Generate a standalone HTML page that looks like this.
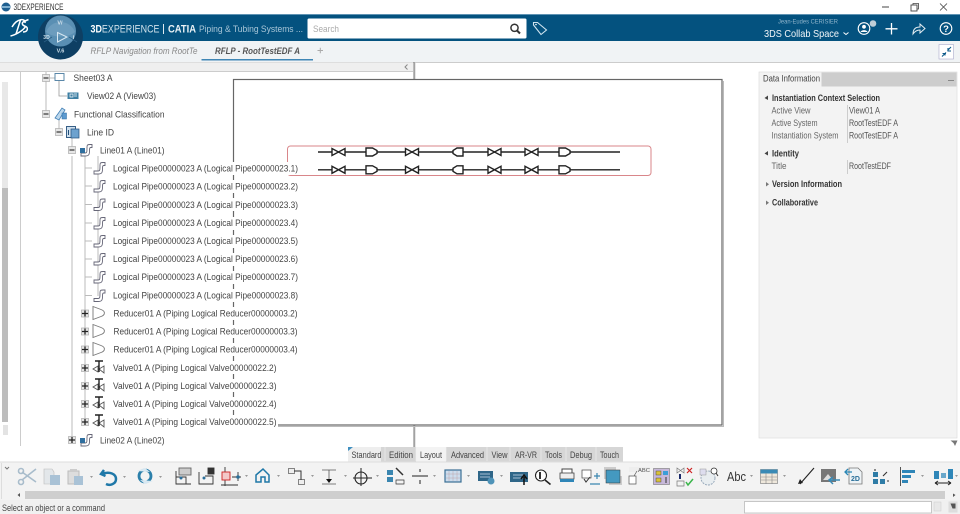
<!DOCTYPE html>
<html><head><meta charset="utf-8"><style>
html,body{margin:0;padding:0;background:#fff;width:960px;height:514px;overflow:hidden}
svg{display:block;font-family:"Liberation Sans",sans-serif;filter:blur(.35px)}
.t{font-size:9.200px;fill:#444}
</style></head><body>
<svg width="960" height="514" viewBox="0 0 960 514" xmlns="http://www.w3.org/2000/svg">
<defs>
<g id="mn"><rect x="-3.500" y="-3.500" width="7" height="7" fill="#e6e6e6" stroke="#aaa" stroke-width=".7"/><path d="M-2.500 0H2.500" stroke="#333" stroke-width="1.200"/></g>
<g id="pl"><rect x="-3.500" y="-3.500" width="7" height="7" fill="#e6e6e6" stroke="#aaa" stroke-width=".7"/><path d="M-3 0H3M0-3V3" stroke="#222" stroke-width="1.300"/></g>
<path id="pipe" d="M-5 3H-1C1 3 1 2 1-3C1-5.500 2-5.500 4-5.500H6V-2.500H4.500C3.500-2.500 3.500-1 3.500 1C3.500 5 2.500 6 -1 6H-5Z" fill="#fff" stroke="#667" stroke-width=".9"/>
<path id="red" d="M-6-6.500L2-3.500C6.500-2 6.500 2 2 3.500L-6 6.500Z" fill="#fff" stroke="#777" stroke-width=".9"/>
<g id="val" fill="none" stroke="#555" stroke-width=".9"><path d="M-6 1L-1 4V-2ZM5-2L0 1L5 5Z" fill="#fff"/><path d="M-4-7H4M0-7V4" stroke="#222" stroke-width="1.400"/></g>
<path id="sv" d="M-6.500-3.500V3.500L6.500-3.500V3.500Z" fill="#fff" stroke="#222" stroke-width="1.400"/>
<path id="sr" d="M-5.500-4H1L5.500-1.500V1.500L1 4H-5.500Z" fill="#fff" stroke="#222" stroke-width="1.400"/>
<path id="sl" d="M5-4H-1L-5-1.500V1.500L-1 4H5Z" fill="#fff" stroke="#222" stroke-width="1.400"/>
<path id="dd" d="M0 0H3L1.500 2Z" fill="#999"/>
</defs>

<!-- title bar -->
<rect width="960" height="14" fill="#fff"/>
<circle cx="6" cy="7" r="4.500" fill="#1f5f90"/><path d="M2 6H10V8H2Z" fill="#7fb0d0"/>
<text x="13.500" y="10.200" font-size="8.800" fill="#333" textLength="50" lengthAdjust="spacingAndGlyphs">3DEXPERIENCE</text>
<path d="M882 7H889" stroke="#444"/>
<rect x="911" y="5" width="6" height="6" fill="none" stroke="#444" stroke-width=".9"/><path d="M913 5V3.500H918.500V9H917" fill="none" stroke="#444" stroke-width=".8"/>
<path d="M940 3.500L947 10.500M947 3.500L940 10.500" stroke="#444" stroke-width=".8"/>

<!-- blue bar -->
<rect y="14" width="960" height="27" fill="#04527f"/>
<rect y="14" width="960" height="1" fill="#5f93b3"/>
<path d="M10.500 36C15 35 23 31 26 26M12 27C17 18 26 18 25 23M20.500 20L16 34M23 32C28 32 29 27 24.500 26C22 25 21 22.500 25 21L28.500 19.500" fill="none" stroke="#fff" stroke-width="1.500"/>
<rect y="41" width="960" height="21" fill="#f0f3f5"/>
<text x="90.500" y="32.500" font-size="10.800" fill="#cfe0ea" textLength="69" lengthAdjust="spacingAndGlyphs"><tspan font-weight="bold" fill="#fff">3D</tspan>EXPERIENCE</text>
<rect x="163" y="24" width="1" height="10" fill="#dfe9ef"/>
<text x="168" y="32.500" font-size="10.800" font-weight="bold" fill="#eaf1f5" textLength="28" lengthAdjust="spacingAndGlyphs">CATIA</text>
<text x="199" y="32" font-size="9.200" fill="#a9c6d8" textLength="104" lengthAdjust="spacingAndGlyphs">Piping &amp; Tubing Systems ...</text>

<!-- compass -->
<circle cx="60.500" cy="37" r="22.500" fill="#0e3f63"/>
<circle cx="60.500" cy="31" r="15.500" fill="#5a8fb3"/>
<path d="M46 32A15.500 15.500 0 0 1 75 32C68 38 53 38 46 32Z" fill="#6c9cbd"/>
<path d="M52 37L44 42M69 37L77 42" stroke="#2a5f85" stroke-width=".8"/>
<path d="M57.500 32.500L67 37L57.500 42Z" fill="none" stroke="#d8e8f2" stroke-width="1"/>
<text x="60" y="24.500" font-size="5.500" font-weight="bold" fill="#dbe8f0" text-anchor="middle">V/</text>
<text x="46.500" y="39" font-size="5" font-weight="bold" fill="#cfe0ea" text-anchor="middle">3D</text>
<text x="73.500" y="39" font-size="5.500" font-weight="bold" fill="#cfe0ea" text-anchor="middle">i</text>
<text x="60.500" y="52.500" font-size="5.500" font-weight="bold" fill="#cfe0ea" text-anchor="middle">V.6</text>

<!-- search -->
<rect x="307.500" y="18.500" width="219" height="20" rx="1.500" fill="#fff"/>
<text x="313" y="32" font-size="9.200" fill="#aaa" textLength="26" lengthAdjust="spacingAndGlyphs">Search</text>
<circle cx="514.500" cy="27.800" r="3.600" fill="none" stroke="#333" stroke-width="1.500"/><path d="M517 30.500L520 33.500" stroke="#333" stroke-width="2"/>
<path d="M533.500 25V22.500H537.500L546.500 30L541 34.500Z" fill="none" stroke="#cfe3ef" stroke-width="1.100"/><circle cx="536" cy="24.500" r=".8" fill="#fff"/>

<!-- user -->
<text x="778" y="23.500" font-size="6.500" fill="#8fb4cb" textLength="60" lengthAdjust="spacingAndGlyphs">Jean-Eudes CERISIER</text>
<text x="764" y="37" font-size="10.200" fill="#f2f6f9" textLength="75" lengthAdjust="spacingAndGlyphs">3DS Collab Space</text>
<path d="M843.500 32.500L846 34.500L848.500 32.500" fill="none" stroke="#fff" stroke-width="1"/>
<circle cx="864" cy="28.500" r="5.800" fill="none" stroke="#fff" stroke-width="1.100"/><circle cx="864" cy="26.800" r="1.900" fill="#fff"/><path d="M860.500 32C861.500 29.500 866.500 29.500 867.500 32Z" fill="#fff"/>
<circle cx="873" cy="23.500" r="3.300" fill="#bfcdd6"/>
<path d="M891.500 23V34.500M885.500 28.800H897.500" stroke="#fff" stroke-width="1.300"/>
<path d="M913 34C913 29 916 27 920 27V24L925 28.500L920 33V30C917 30 915 31 913 34Z" fill="none" stroke="#e6eef3" stroke-width="1"/>
<circle cx="946" cy="28.500" r="5.800" fill="none" stroke="#fff" stroke-width="1.100"/>
<text x="946" y="32" font-size="9.500" font-weight="bold" fill="#fff" text-anchor="middle">?</text>

<!-- tabs -->
<text x="90.500" y="54" font-size="9.200" font-style="italic" fill="#888" textLength="107" lengthAdjust="spacingAndGlyphs">RFLP Navigation from RootTe</text>
<text x="215" y="54" font-size="9.200" font-style="italic" font-weight="bold" fill="#555" textLength="85" lengthAdjust="spacingAndGlyphs">RFLP - RootTestEDF A</text>
<rect x="201.500" y="59" width="111.500" height="1.500" fill="#3f86b5"/>
<path d="M317.500 50.500H323M320.300 47.800V53.200" stroke="#aaa" stroke-width="1"/>
<rect x="939" y="44.500" width="14.500" height="14.500" fill="#fff" stroke="#aac" stroke-width=".6"/>
<path d="M942 56.500L946 52.500M945 53V55.500M942.500 53.500H946M951 47L947.500 50.500M948 48V51H951" stroke="#0c5a8a" stroke-width="1.100" fill="none"/>
<rect y="62" width="960" height="1" fill="#ccc"/>

<!-- left panel strip -->
<rect y="62.500" width="413" height="8.500" fill="#efefef"/>
<rect y="71" width="413" height="1" fill="#ccc"/>
<path d="M407.500 64.500L405 67L407.500 69.500" fill="none" stroke="#888"/>
<path d="M414 62V79M414 425V447" stroke="#777" stroke-width="1"/>
<path d="M415 62V79M415 425V447" stroke="#ccc" stroke-width="1"/>

<!-- scroll and guide -->
<rect x="2" y="82" width="6" height="340" fill="#e8e8e8"/>
<rect x="2" y="188" width="6" height="234" fill="#bdbdbd"/>
<rect x="3" y="425" width="5" height="10" fill="#e3e3e3"/>
<rect x="20" y="72" width="1" height="374" fill="#ccc"/>

<!-- drawing frame -->
<rect x="233.500" y="79.500" width="488.500" height="345.500" fill="#fff" stroke="#666" stroke-width="1.200"/>
<path d="M723.500 81V426.500H236" fill="none" stroke="#bbb" stroke-width="1"/>
<rect x="287.500" y="146" width="363.500" height="29.500" rx="3" fill="none" stroke="#d9868a" stroke-width="1"/>
<path d="M318 152H620M318 169.800H620" stroke="#222" stroke-width="1.400"/>
<g id="s1"><use href="#sv" x="338.500" y="152"/><use href="#sr" x="371.500" y="152"/><use href="#sv" x="412" y="152"/><use href="#sl" x="458" y="152"/><use href="#sv" x="494.500" y="152"/><use href="#sv" x="531.500" y="152"/><use href="#sr" x="564.500" y="152"/></g>
<use href="#s1" y="17.800"/>

<!-- tree lines -->
<path d="M46 72V114M59 120V132M59 78H46M72 138V150M85 156V422M72 156V440M98 156V296" fill="none" stroke="#bbb" stroke-width="1"/>
<path d="M59 78V96H67" fill="none" stroke="#999" stroke-width=".8"/>

<!-- row backgrounds covering frame -->
<g fill="#fff">
<rect x="110" y="162" width="190" height="13"/><rect x="110" y="180" width="190" height="13"/><rect x="110" y="198" width="190" height="13"/><rect x="110" y="217" width="190" height="13"/><rect x="110" y="235" width="190" height="13"/><rect x="110" y="253" width="190" height="13"/><rect x="110" y="271" width="190" height="13"/><rect x="110" y="289" width="190" height="13"/><rect x="110" y="307" width="190" height="13"/><rect x="110" y="325" width="190" height="13"/><rect x="110" y="343" width="190" height="13"/><rect x="110" y="361" width="168" height="13"/><rect x="110" y="379" width="168" height="13"/><rect x="110" y="397" width="168" height="13"/><rect x="110" y="415" width="168" height="13"/>
</g>

<!-- tree -->
<use href="#mn" x="46" y="78"/>
<rect x="55" y="73.500" width="9" height="7" fill="#fff" stroke="#4a7ca0" stroke-width=".9"/>
<text class="t" x="73.500" y="81" textLength="39" lengthAdjust="spacingAndGlyphs">Sheet03 A</text>
<rect x="67.500" y="92.500" width="11" height="6.500" fill="#3e7fa3"/><path d="M70 94H73V97H70ZM74 94H77M74 96H77" stroke="#fff" stroke-width=".7" fill="none"/>
<text class="t" x="87" y="99" textLength="69" lengthAdjust="spacingAndGlyphs">View02 A (View03)</text>

<use href="#mn" x="46" y="114"/>
<path d="M55 118L62 108L65 110L59 120Z" fill="#bcd7ec" stroke="#3f7eb5" stroke-width=".8"/><rect x="62" y="113" width="4.500" height="6" fill="#5d9ad0" stroke="#2d6aa0" stroke-width=".5"/>
<text class="t" x="74" y="117.500" textLength="90.500" lengthAdjust="spacingAndGlyphs">Functional Classification</text>

<use href="#mn" x="59" y="132"/>
<rect x="66.500" y="126.500" width="9" height="11" fill="#cfe0ee" stroke="#234f7a" stroke-width=".9"/><rect x="71" y="129" width="8" height="9" fill="#6da2cf" stroke="#234f7a" stroke-width=".7"/><path d="M68.500 130V135" stroke="#234f7a"/>
<text class="t" x="87" y="135.500" textLength="27" lengthAdjust="spacingAndGlyphs">Line ID</text>

<use href="#mn" x="72" y="150"/>
<use href="#pipe" x="86" y="150"/><rect x="80" y="148" width="5" height="5" fill="#2f6f9f"/>
<text class="t" x="100" y="153.500" textLength="64.500" lengthAdjust="spacingAndGlyphs">Line01 A (Line01)</text>

<g stroke="#bbb" stroke-width="1"><path d="M85 168H92M85 186H92M85 204.500H92M85 223H92M85 241H92M85 259H92M85 277H92M85 295.500H92"/></g>
<use href="#pipe" x="99" y="168"/><use href="#pipe" x="99" y="186"/><use href="#pipe" x="99" y="204.500"/><use href="#pipe" x="99" y="223"/><use href="#pipe" x="99" y="241"/><use href="#pipe" x="99" y="259"/><use href="#pipe" x="99" y="277"/><use href="#pipe" x="99" y="295.500"/>

<text class="t" x="113" y="171.500" textLength="185" lengthAdjust="spacingAndGlyphs">Logical Pipe00000023 A (Logical Pipe00000023.1)</text>
<text class="t" x="113" y="189.500" textLength="185" lengthAdjust="spacingAndGlyphs">Logical Pipe00000023 A (Logical Pipe00000023.2)</text>
<text class="t" x="113" y="208" textLength="185" lengthAdjust="spacingAndGlyphs">Logical Pipe00000023 A (Logical Pipe00000023.3)</text>
<text class="t" x="113" y="226" textLength="185" lengthAdjust="spacingAndGlyphs">Logical Pipe00000023 A (Logical Pipe00000023.4)</text>
<text class="t" x="113" y="244" textLength="185" lengthAdjust="spacingAndGlyphs">Logical Pipe00000023 A (Logical Pipe00000023.5)</text>
<text class="t" x="113" y="262" textLength="185" lengthAdjust="spacingAndGlyphs">Logical Pipe00000023 A (Logical Pipe00000023.6)</text>
<text class="t" x="113" y="280" textLength="185" lengthAdjust="spacingAndGlyphs">Logical Pipe00000023 A (Logical Pipe00000023.7)</text>
<text class="t" x="113" y="298.500" textLength="185" lengthAdjust="spacingAndGlyphs">Logical Pipe00000023 A (Logical Pipe00000023.8)</text>

<use href="#red" x="99" y="313"/><use href="#pl" x="85" y="313.500"/>
<use href="#red" x="99" y="331"/><use href="#pl" x="85" y="331.500"/>
<use href="#red" x="99" y="349"/><use href="#pl" x="85" y="349.500"/>
<text class="t" x="113.500" y="316.500" textLength="184" lengthAdjust="spacingAndGlyphs">Reducer01 A (Piping Logical Reducer00000003.2)</text>
<text class="t" x="113.500" y="334.500" textLength="184" lengthAdjust="spacingAndGlyphs">Reducer01 A (Piping Logical Reducer00000003.3)</text>
<text class="t" x="113.500" y="352.500" textLength="184" lengthAdjust="spacingAndGlyphs">Reducer01 A (Piping Logical Reducer00000003.4)</text>

<use href="#val" x="99" y="368"/><use href="#pl" x="85" y="368"/>
<use href="#val" x="99" y="386"/><use href="#pl" x="85" y="386"/>
<use href="#val" x="99" y="404"/><use href="#pl" x="85" y="404"/>
<use href="#val" x="99" y="422"/><use href="#pl" x="85" y="422"/>
<text class="t" x="113" y="371" textLength="163.500" lengthAdjust="spacingAndGlyphs">Valve01 A (Piping Logical Valve00000022.2)</text>
<text class="t" x="113" y="389" textLength="163.500" lengthAdjust="spacingAndGlyphs">Valve01 A (Piping Logical Valve00000022.3)</text>
<text class="t" x="113" y="407" textLength="163.500" lengthAdjust="spacingAndGlyphs">Valve01 A (Piping Logical Valve00000022.4)</text>
<text class="t" x="113" y="425" textLength="163.500" lengthAdjust="spacingAndGlyphs">Valve01 A (Piping Logical Valve00000022.5)</text>

<use href="#pl" x="72" y="440"/>
<use href="#pipe" x="86" y="440"/><rect x="80" y="438" width="5" height="5" fill="#2f6f9f"/>
<text class="t" x="100" y="443.500" textLength="64.500" lengthAdjust="spacingAndGlyphs">Line02 A (Line02)</text>

<!-- right panel -->
<rect x="759" y="72" width="198" height="366" fill="#f3f3f3" stroke="#ddd" stroke-width=".7"/>
<rect x="759.500" y="72.500" width="197" height="14" fill="#cdcdcd"/>
<rect x="759.500" y="72.500" width="62" height="14" fill="#f3f3f3"/>
<text x="763" y="81.500" font-size="8.800" fill="#444" textLength="57" lengthAdjust="spacingAndGlyphs">Data Information</text>
<path d="M948 80.500H954" stroke="#888"/>
<g font-size="8.800" fill="#555">
<path d="M768 95.500V100L764.500 98Z M768 151V155.500L764.500 153.500Z" fill="#444"/>
<path d="M766 182V186.500L769 184.300Z M766 200.500V205L769 202.800Z" fill="#777"/>
<text x="772" y="101" font-weight="bold" fill="#333" textLength="108" lengthAdjust="spacingAndGlyphs">Instantiation Context Selection</text>
<text x="771.500" y="113.500" fill="#666" textLength="39" lengthAdjust="spacingAndGlyphs">Active View</text>
<text x="771.500" y="126" fill="#666" textLength="46" lengthAdjust="spacingAndGlyphs">Active System</text>
<text x="771.500" y="138.500" fill="#666" textLength="67" lengthAdjust="spacingAndGlyphs">Instantiation System</text>
<text x="849" y="113.500" textLength="31" lengthAdjust="spacingAndGlyphs">View01 A</text>
<text x="849" y="126" textLength="49" lengthAdjust="spacingAndGlyphs">RootTestEDF A</text>
<text x="849" y="138.500" textLength="49" lengthAdjust="spacingAndGlyphs">RootTestEDF A</text>
<text x="772" y="156.500" font-weight="bold" fill="#333" textLength="27" lengthAdjust="spacingAndGlyphs">Identity</text>
<text x="771.500" y="169" fill="#666" textLength="15" lengthAdjust="spacingAndGlyphs">Title</text>
<text x="849" y="169" textLength="42" lengthAdjust="spacingAndGlyphs">RootTestEDF</text>
<text x="772" y="187" font-weight="bold" fill="#333" textLength="70" lengthAdjust="spacingAndGlyphs">Version Information</text>
<text x="772" y="205.500" font-weight="bold" fill="#333" textLength="46" lengthAdjust="spacingAndGlyphs">Collaborative</text>
</g>
<path d="M847.500 105V143M847.500 160V174" stroke="#ccc"/>
<path d="M950.500 440.500H957.500L955 446L953.500 443Z" fill="#777"/>

<!-- workbench tabs -->
<rect x="348" y="447" width="275" height="14.500" fill="#d6d6d6"/>
<rect x="348" y="447" width="33" height="14.500" fill="#eee"/>
<rect x="416" y="447" width="30" height="14.500" fill="#f3f3f3"/>
<path d="M348 447H353L348 451Z" fill="#3f8fc0"/>
<path d="M385 447V461M416 447V461M446 447V461M487 447V461M510 447V461M541 447V461M566 447V461M596 447V461" stroke="#eee" stroke-width=".7"/>
<g font-size="9" fill="#444">
<text x="351.500" y="458" textLength="30" lengthAdjust="spacingAndGlyphs">Standard</text>
<text x="389" y="458" textLength="24" lengthAdjust="spacingAndGlyphs">Edition</text>
<text x="420" y="458" textLength="22" lengthAdjust="spacingAndGlyphs">Layout</text>
<text x="451" y="458" textLength="33" lengthAdjust="spacingAndGlyphs">Advanced</text>
<text x="491.500" y="458" textLength="16" lengthAdjust="spacingAndGlyphs">View</text>
<text x="515" y="458" textLength="22" lengthAdjust="spacingAndGlyphs">AR-VR</text>
<text x="545" y="458" textLength="17" lengthAdjust="spacingAndGlyphs">Tools</text>
<text x="570" y="458" textLength="22" lengthAdjust="spacingAndGlyphs">Debug</text>
<text x="600" y="458" textLength="19" lengthAdjust="spacingAndGlyphs">Touch</text>
</g>

<!-- toolbar -->
<rect y="461.500" width="960" height="38.500" fill="#f3f3f3"/>
<rect y="461.500" width="960" height="1" fill="#ddd"/>
<rect y="500" width="960" height="14" fill="#f0f0f0"/>
<rect x="25" y="491" width="920" height="8" fill="#cecece"/>
<path d="M20 493V497L17.500 495Z" fill="#555"/><path d="M953 493.500V497L955.500 495Z" fill="#555"/>
<path d="M5 467L7 469L9 467" fill="none" stroke="#777"/>
<rect x="1" y="463" width="1" height="36" fill="#ddd"/>

<!-- scissors copy paste -->
<g fill="none" stroke="#a8bccb" stroke-width="1.600"><path d="M36 469L22 480M36 482L22 472"/><circle cx="21" cy="471" r="2.500"/><circle cx="21" cy="482" r="2.500"/></g>
<path d="M44 469H52L54 472V484H44Z" fill="#e3e7ea" stroke="#bbb" stroke-width=".6"/><rect x="50" y="475" width="10" height="10" fill="#a9c2d6"/>
<rect x="68" y="471" width="11" height="13" fill="#ddd" stroke="#bbb"/><rect x="70" y="469" width="7" height="3" fill="#ccc"/><rect x="74" y="476" width="9" height="9" fill="#a9c2d6"/>
<use href="#dd" x="90" y="476"/>
<path d="M104 470L101 474L105.500 476M101.500 474C110 471 116 474 116 479C116 484 110 486 106 484" fill="none" stroke="#1f78a8" stroke-width="2.500"/>
<use href="#dd" x="123" y="476"/>
<g fill="none" stroke="#2b7faa" stroke-width="2.800"><circle cx="145" cy="476" r="6"/></g><path d="M137 471L145 468L150 472ZM153 481L145 484L140 480Z" fill="#d7e8f2"/>
<use href="#dd" x="159" y="476"/>

<!-- diagram tools -->
<g fill="none" stroke="#333" stroke-width=".9">
<path d="M176 471V484H191"/><path d="M176 477H186V484"/><rect x="179" y="468" width="12" height="7" fill="#ccc" stroke="#666"/><circle cx="181" cy="478" r="1.500" fill="#2b6f9a" stroke="none"/>
<path d="M199 472V484H213V476H205"/><circle cx="204" cy="478" r="1.500" fill="#2b6f9a" stroke="none"/><rect x="208" y="468" width="6" height="6" fill="#333"/>
<path d="M225 467V486M221 485H238M238 472V481M232 477H241"/>
<rect x="222" y="472" width="8" height="8" fill="#f3c8c8" stroke="#c22"/><circle cx="238" cy="477" r="1.800" fill="#2b6f9a" stroke="none"/>
</g>
<use href="#dd" x="245" y="475"/>
<path d="M256 482V475L263 469L269 475V482H265V477H261V482Z" fill="none" stroke="#1f78a8" stroke-width="1.500"/>
<use href="#dd" x="277" y="475"/>
<rect x="288.500" y="468.500" width="6" height="5" fill="#eee" stroke="#555" stroke-width=".7"/><rect x="298.500" y="479.500" width="6" height="5" fill="#eee" stroke="#555" stroke-width=".7"/><path d="M294 471H301V480" fill="none" stroke="#333"/>
<use href="#dd" x="311" y="475"/>
<g fill="none" stroke="#555" stroke-width=".8"><path d="M322 470H336M322 484H336M329 470V480"/></g><path d="M326 479H332L329 483Z" fill="#111"/>
<use href="#dd" x="344" y="475"/>
<circle cx="361" cy="478" r="6" fill="none" stroke="#222" stroke-width="1.100"/><path d="M361 468V486M353 478H372" stroke="#222"/>
<use href="#dd" x="376" y="475"/>
<rect x="387" y="470" width="6" height="5" fill="#3a86b0"/><rect x="387" y="477" width="6" height="5" fill="#3a86b0"/><path d="M396 468L403 475" stroke="#333" stroke-width="1.500"/><path d="M396 484H404V480H396Z" fill="none" stroke="#333" stroke-width=".7"/>
<path d="M412 476H428M420 469V472M420 480V484" stroke="#222" stroke-width="1"/>
<use href="#dd" x="433" y="475"/>
<rect x="445" y="470" width="16" height="12" fill="#cde" stroke="#3a6f95" stroke-width="1.200"/><path d="M449 471V481M453 471V481M457 471V481M446 474H460M446 478H460" stroke="#b99" stroke-width=".4"/>
<use href="#dd" x="467" y="475"/>
<rect x="478" y="471" width="15" height="10" fill="#2f6688"/><circle cx="491" cy="481" r="3.500" fill="#4f93b8"/><path d="M480 474H490M480 477H490" stroke="#cde" stroke-width=".8"/>
<use href="#dd" x="500" y="475"/>
<rect x="510" y="472" width="18" height="10" fill="#2f6688"/><path d="M513 475H524M513 478H524" stroke="#cde" stroke-width=".8"/><path d="M524 485V477M521 479L524 475L527 479" fill="none" stroke="#111" stroke-width="1.500"/>
<circle cx="541" cy="475.500" r="5.500" fill="#fff" stroke="#222" stroke-width="1.100"/><path d="M545 480L550.500 484.500" stroke="#222" stroke-width="1.600"/><path d="M539 472V479H541V472Z" fill="#333"/>
<path d="M562 473V469H572V473" fill="#fff" stroke="#444"/><rect x="560" y="473" width="14" height="6" fill="#eee" stroke="#444" stroke-width=".8"/><rect x="560" y="479" width="14" height="3" fill="#2f86b8"/>
<rect x="582" y="470" width="9" height="8" fill="#fff" stroke="#444" stroke-width=".7"/><path d="M590 477L586 482L584 479" fill="none" stroke="#333"/><path d="M594 476H600M597 473V479M590 484H600" stroke="#3a86b0" stroke-width="1.200"/>
<rect x="604" y="467" width="12" height="12" fill="#ccc"/><rect x="609" y="476" width="13" height="9" fill="#ccc"/><rect x="606" y="470" width="14" height="13" fill="#4499c0" stroke="#333" stroke-width=".5"/>
<rect x="629" y="467" width="21" height="5" fill="#eee"/><text x="638" y="472" font-size="5.500" fill="#555" textLength="12" lengthAdjust="spacingAndGlyphs">ABC</text><path d="M629 476H636V484H629ZM637 471L634 476" fill="#fff" stroke="#555" stroke-width=".7"/>
<rect x="653.500" y="468.500" width="16" height="16" fill="#c7b8d9" stroke="#777" stroke-width=".6"/><rect x="656" y="471" width="5" height="4" fill="#d9c23a" stroke="#333" stroke-width=".4"/><rect x="663" y="471" width="5" height="4" fill="#3c9ed8"/><rect x="656" y="478" width="5" height="4" fill="#d9c23a" stroke="#333" stroke-width=".4"/><path d="M666 477V483" stroke="#333"/>
<path d="M677 468L684 473V468L677 473Z" fill="none" stroke="#777" stroke-width=".7"/><path d="M680 474V479" stroke="#1a2a6a" stroke-width="2"/><path d="M677 481H684V486H677Z" fill="none" stroke="#777" stroke-width=".7"/><path d="M687 468L692 473M692 468L687 473" stroke="#c22" stroke-width="1.200"/><path d="M686 482L688 485L693 479" fill="none" stroke="#3ab54a" stroke-width="1.500"/>
<circle cx="708" cy="478" r="7" fill="#e8edf0" stroke="#9ab" stroke-width="1" stroke-dasharray="2 1"/><rect x="700" y="469" width="6" height="6" fill="#dde" stroke="#999" stroke-width=".5"/><circle cx="714" cy="471" r="3" fill="#fff" stroke="#333" stroke-width=".8"/><path d="M716 473L718 476" stroke="#333"/>
<text x="727" y="481" font-size="13" fill="#333" textLength="19" lengthAdjust="spacingAndGlyphs">Abc</text>
<use href="#dd" x="750" y="475"/>
<rect x="760.500" y="469.500" width="17" height="14" fill="#efe8dc" stroke="#888" stroke-width=".7"/><rect x="760.500" y="469.500" width="17" height="4" fill="#3a8ab5"/><path d="M766 473V484M772 473V484M761 477H777M761 480H777" stroke="#888" stroke-width=".6"/>
<use href="#dd" x="783" y="475"/>
<path d="M814 468L800 484" stroke="#222" stroke-width="1.100"/><path d="M798 484L803 483L800 479Z" fill="#222"/>
<rect x="821" y="469" width="15" height="13" fill="#777"/><path d="M823 480L828 474L833 480Z" fill="#ddd"/><path d="M840 480H829M833 477L829 480L833 484" fill="none" stroke="#3a8ab5" stroke-width="1.500"/>
<path d="M849 468H858L862 472V484H849Z" fill="#eef3f6" stroke="#777" stroke-width=".8"/><text x="851" y="481" font-size="7" font-weight="bold" fill="#2a6f99">2D</text><path d="M845 472H852M848 469L845 472L848 475" fill="none" stroke="#2a86b5" stroke-width="1.300"/>
<path d="M873 472H878V477H873ZM873 479H878V484H873ZM880 479H885V484H880Z" fill="#2f7ca6"/><path d="M875 469V471M883 476L887 472M887 481H889" stroke="#333" stroke-width="1.100"/>
<path d="M900.500 467V486" stroke="#555"/><rect x="902" y="470" width="13" height="3" fill="#2f86b8"/><rect x="902" y="475" width="9" height="3" fill="#2f86b8"/><rect x="902" y="480" width="6" height="3" fill="#2f86b8"/>
<use href="#dd" x="921" y="475"/>
<rect x="934" y="471" width="5" height="8" fill="#2f86b8"/><rect x="941" y="473" width="5" height="5" fill="#2f86b8" opacity=".7"/><rect x="948" y="469" width="5" height="10" fill="#2f86b8"/>
<path d="M935 483H951M935 483L938 481M935 483L938 485M951 483L948 481M951 483L948 485" fill="none" stroke="#222"/>
<use href="#dd" x="955" y="475"/>

<!-- status -->
<text x="2" y="511" font-size="8.800" fill="#444" textLength="103" lengthAdjust="spacingAndGlyphs">Select an object or a command</text>
<rect x="744.500" y="501.500" width="187" height="11.500" fill="#fff" stroke="#bbb" stroke-width=".8"/>
<rect x="934" y="502" width="7" height="9" fill="#e8e8e8" stroke="#ccc" stroke-width=".5"/>
<rect x="948.500" y="501.500" width="9" height="11" fill="#ddd"/><path d="M950.500 503.500H955.500V508.500H952.500Z" fill="#555"/>
</svg>
</body></html>
